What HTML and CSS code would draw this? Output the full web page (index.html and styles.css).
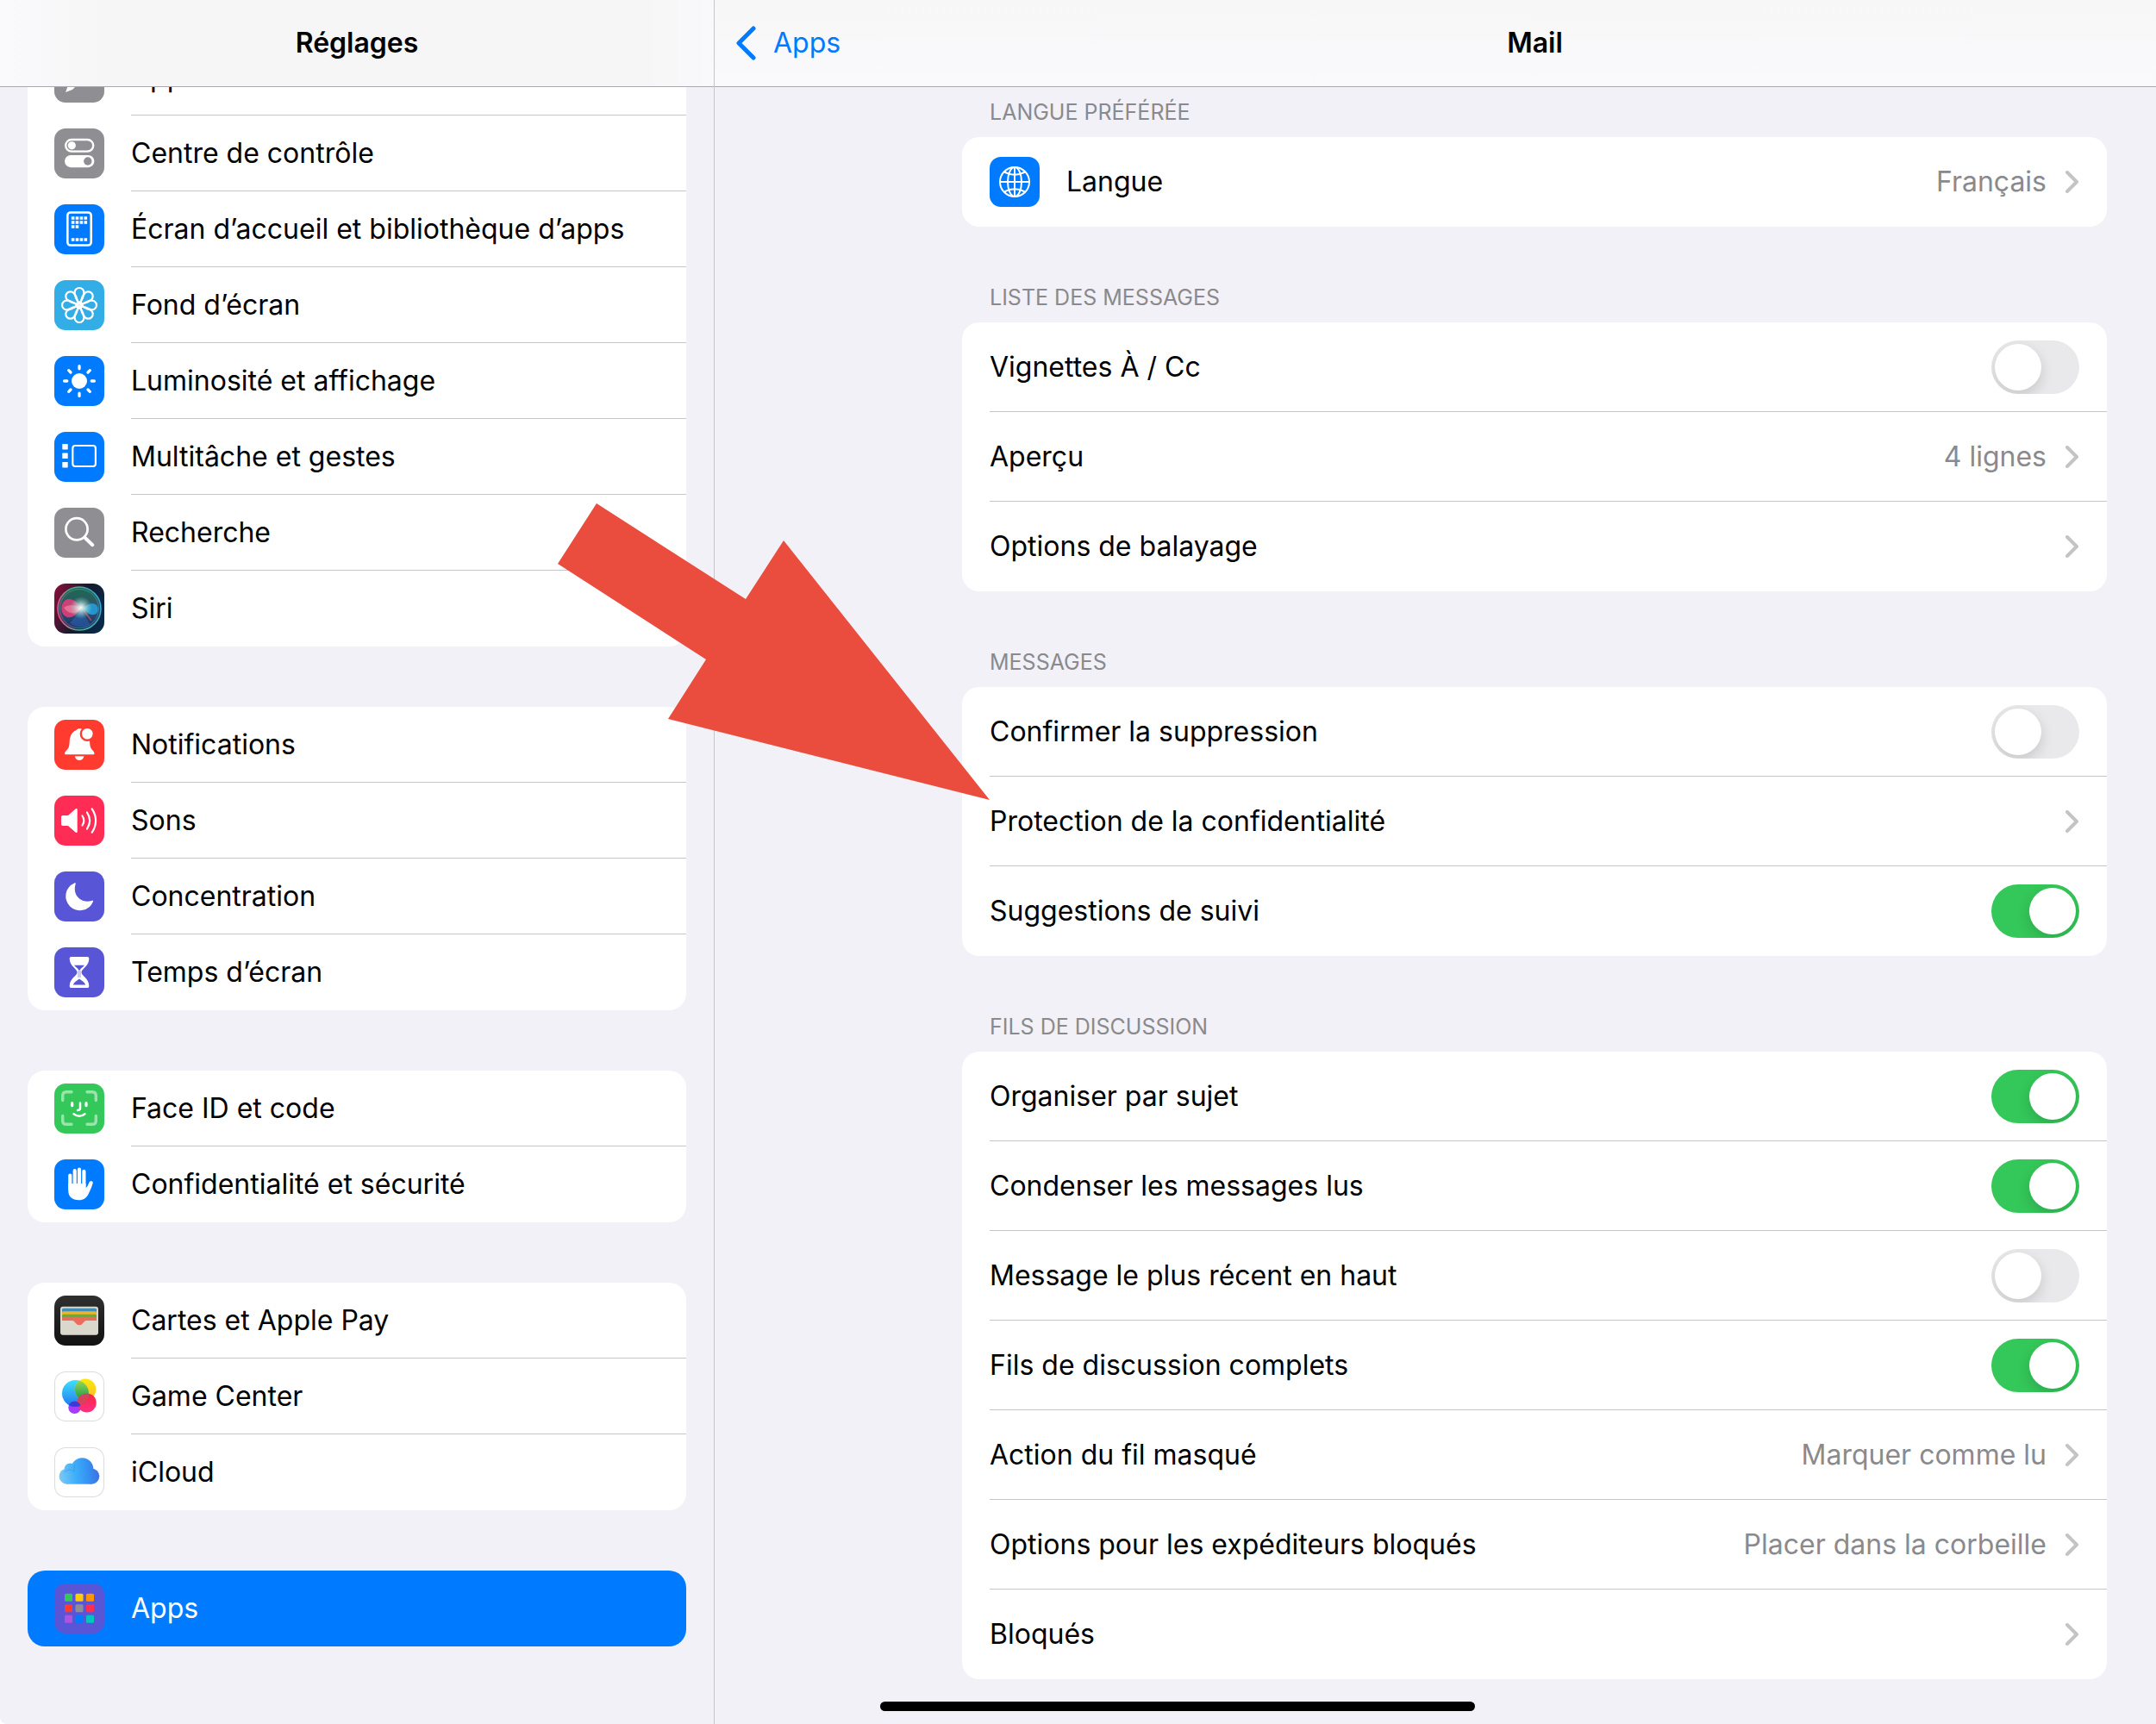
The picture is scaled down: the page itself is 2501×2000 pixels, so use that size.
FILE: index.html
```html
<!DOCTYPE html>
<html lang="fr">

<head>
   <meta charset="UTF-8" />
   <meta name="viewport" content="width=device-width, initial-scale=1" />
   <title>Réglages</title>
   <link rel="stylesheet" href="styles.css">
</head>

<body>
   <div class="app">
      <aside class="sidebar">
         <header class="navbar">
            <h1>Réglages</h1>
         </header>

         <nav class="menu">
            <div class="card">
               <a class="item" href="#">
                  <svg class="icon gray" viewBox="0 0 58 58">
                     <path d="M44 10l5 5-28 28-8 3 3-8z" fill="#fff" />
                  </svg>
                  <span class="label">Apple Pencil</span>
               </a>
               <a class="item" href="#">
                  <svg class="icon gray" viewBox="0 0 58 58">
                     <rect x="13.2" y="13" width="32" height="13.6" rx="6.8" fill="none" stroke="#fff" stroke-width="2.4" />
                     <circle cx="20.3" cy="19.8" r="4.6" fill="#fff" />
                     <rect x="12" y="31" width="34.4" height="14.2" rx="7.1" fill="#fff" />
                     <circle cx="38.8" cy="38" r="4.7" fill="#8e8e93" />
                  </svg>
                  <span class="label">Centre de contrôle</span>
               </a>
               <a class="item" href="#">
                  <svg class="icon blue" viewBox="0 0 58 58">
                     <rect x="15.3" y="9.5" width="27.4" height="38" rx="3.5" fill="none" stroke="#fff" stroke-width="2.6" />
                     <path d="M19.8 16h18.4M19.8 21h18.4M19.8 26h9M19.8 41h18.4" stroke="#fff" stroke-width="3.6" stroke-dasharray="3.6 1.3" />
                  </svg>
                  <span class="label">Écran d’accueil et bibliothèque d’apps</span>
               </a>
               <a class="item" href="#">
                  <svg class="icon cyan" viewBox="0 0 58 58">
                     <defs>
                        <path id="petal" d="M29 27C26 23 23.6 18 23.6 14.400a5.400 5.400 0 0 1 10.800 0C34.400 18 32 23 29 27z" />
                     </defs>
                     <g fill="none" stroke="#fff" stroke-width="2.2">
                        <use href="#petal" />
                        <use href="#petal" transform="rotate(45 29 29)" />
                        <use href="#petal" transform="rotate(90 29 29)" />
                        <use href="#petal" transform="rotate(135 29 29)" />
                        <use href="#petal" transform="rotate(180 29 29)" />
                        <use href="#petal" transform="rotate(225 29 29)" />
                        <use href="#petal" transform="rotate(270 29 29)" />
                        <use href="#petal" transform="rotate(315 29 29)" />
                        <circle cx="29" cy="29" r="3.400" />
                     </g>
                  </svg>
                  <span class="label">Fond d’écran</span>
               </a>
               <a class="item" href="#">
                  <svg class="icon blue" viewBox="0 0 58 58">
                     <circle cx="29" cy="29" r="9" fill="#fff" />
                     <path d="M29 11.6v3.2M29 43.2v3.2M11.6 29h3.2M43.2 29h3.2M16.7 16.7l2.3 2.3M39 39l2.3 2.3M41.3 16.7L39 19M19 39l-2.3 2.3" stroke="#fff" stroke-width="3.3" stroke-linecap="round" />
                  </svg>
                  <span class="label">Luminosité et affichage</span>
               </a>
               <a class="item" href="#">
                  <svg class="icon blue" viewBox="0 0 58 58">
                     <g fill="#fff">
                        <rect x="9.3" y="14" width="6.4" height="6.4" rx="0.6" />
                        <rect x="9.3" y="24.6" width="6.4" height="6.4" rx="0.6" />
                        <rect x="9.3" y="35" width="6.4" height="6.4" rx="0.6" />
                     </g>
                     <rect x="21.3" y="16" width="26.6" height="24" rx="3" fill="none" stroke="#fff" stroke-width="2.2" />
                  </svg>
                  <span class="label">Multitâche et gestes</span>
               </a>
               <a class="item" href="#">
                  <svg class="icon gray" viewBox="0 0 58 58" fill="none" stroke="#fff" stroke-linecap="round">
                     <circle cx="26" cy="24.8" r="12.6" stroke-width="2.7" />
                     <path d="M36 35.2l8.3 8" stroke-width="4" />
                  </svg>
                  <span class="label">Recherche</span>
               </a>
               <a class="item" href="#">
                  <svg class="icon" viewBox="0 0 58 58">
                     <defs>
                        <linearGradient id="siriBg" x1="0" y1="0.3" x2="1" y2="0.7">
                           <stop offset="0" stop-color="#7a1038" />
                           <stop offset="0.5" stop-color="#151a2c" />
                           <stop offset="1" stop-color="#082b4a" />
                        </linearGradient>
                        <linearGradient id="siriRing" x1="0" y1="0.6" x2="1" y2="0.4">
                           <stop offset="0" stop-color="#f0507e" />
                           <stop offset="0.4" stop-color="#4fae93" />
                           <stop offset="1" stop-color="#35a5cf" />
                        </linearGradient>
                        <linearGradient id="siriOrb" x1="0.5" y1="0" x2="0.5" y2="1">
                           <stop offset="0" stop-color="#1c6a50" />
                           <stop offset="0.5" stop-color="#33506c" />
                           <stop offset="1" stop-color="#143068" />
                        </linearGradient>
                        <radialGradient id="siriGlow">
                           <stop offset="0" stop-color="#fff" />
                           <stop offset="0.3" stop-color="#e4fff6" stop-opacity="0.7" />
                           <stop offset="1" stop-color="#7fe0c5" stop-opacity="0" />
                        </radialGradient>
                     </defs>
                     <rect width="58" height="58" fill="url(#siriBg)" />
                     <circle cx="29" cy="29" r="25" fill="url(#siriOrb)" stroke="url(#siriRing)" stroke-width="1.6" />
                     <circle cx="29" cy="29" r="22.5" fill="none" stroke="url(#siriRing)" stroke-opacity="0.6" />
                     <path d="M31 29C25 18 17 16 12 20c-5 4-5 15 1 18 6 4 13-2 18-9z" fill="#e83e78" fill-opacity="0.85" />
                     <path d="M11 28c7-5 14-3 20 1-5 7-13 8-20-1z" fill="#f7a0b8" fill-opacity="0.5" />
                     <path d="M33 29c6-6 12-8 16-4 3 4 2 10-3 11-5 1-9-3-13-7z" fill="#269bd8" fill-opacity="0.9" />
                     <path d="M31 30L18 46c8 6 18 5 23 1z" fill="#2b68bd" fill-opacity="0.5" />
                     <path d="M34 31l9 12" stroke="#d9506b" stroke-width="1.5" stroke-opacity="0.7" />
                     <circle cx="31" cy="28" r="13" fill="url(#siriGlow)" />
                  </svg>
                  <span class="label">Siri</span>
               </a>
            </div>

            <div class="card">
               <a class="item" href="#">
                  <svg class="icon red" viewBox="0 0 58 58">
                     <path d="M12 39c0-2 3-4 4.200-6 2-3.500 1-8 2-12 1-4.500 3.500-7.500 7.300-9 1-1.300 2.500-1.800 4-1.800 2 0 3 .6 4 1.800 4 1.800 6 5 7 9 1 4 .2 8.500 2 12 1.200 2 4 4 4 6 0 .9-.6 1.300-1.500 1.300h-31.500c-.9 0-1.500-.4-1.500-1.300z" fill="#fff" />
                     <path d="M23.8 42.3h10.600c-.6 3-2.500 4.700-5.300 4.700s-4.700-1.700-5.300-4.700z" fill="#fff" />
                     <circle cx="38.3" cy="16.3" r="7.5" fill="#fff" stroke="#ff3b30" stroke-width="2.4" />
                  </svg>
                  <span class="label">Notifications</span>
               </a>
               <a class="item" href="#">
                  <svg class="icon pink" viewBox="0 0 58 58">
                     <path d="M10 23h6l8.500-7.600c1-.8 2.200-.4 2.200.9v25.400c0 1.300-1.200 1.700-2.200.9L16 35h-6c-1.300 0-2-.8-2-2v-8c0-1.200.7-2 2-2z" fill="#fff" />
                     <path d="M32.5 23.5c2.300 3.400 2.300 7.600 0 11M38 19.500c4 6 4 13 0 19M43.7 15.300c5.800 8.400 5.800 19 0 27.400" fill="none" stroke="#fff" stroke-width="2.2" stroke-linecap="round" />
                  </svg>
                  <span class="label">Sons</span>
               </a>
               <a class="item" href="#">
                  <svg class="icon indigo" viewBox="0 0 58 58">
                     <path d="M23.3 13.500A16.500 16.500 0 1 0 45 35c.4-1-.3-1.600-1.300-1.200C32 38 20.500 28 24.700 14.600c.3-1-.4-1.500-1.400-1.100z" fill="#fff" />
                  </svg>
                  <span class="label">Concentration</span>
               </a>
               <a class="item" href="#">
                  <svg class="icon indigo" viewBox="0 0 58 58">
                     <path d="M20 11h18c1.600 0 2.300.9 2.300 2.300C40.300 22 31.500 25 31.500 29s8.800 7 8.800 15.700c0 1.400-.7 2.300-2.300 2.300H20c-1.600 0-2.300-.9-2.300-2.300C17.700 36 26.500 33 26.500 29s-8.800-7-8.800-15.700C17.700 11.900 18.400 11 20 11z" fill="#fff" />
                     <path d="M23 20.700h12c-1.500 2-5 3.800-5.200 5.800h-1.600c-.2-2-3.700-3.800-5.200-5.800zM21.800 43.600c1-3 4-4.500 7.200-7 3.200 2.500 6.200 4 7.200 7z" fill="#5856d6" />
                     <path d="M28 27v8M30 27v8" stroke="#5856d6" stroke-width="0.6" />
                  </svg>
                  <span class="label">Temps d’écran</span>
               </a>
            </div>

            <div class="card">
               <a class="item" href="#">
                  <svg class="icon green" viewBox="0 0 58 58" fill="none" stroke="#fff" stroke-linecap="round">
                     <path d="M9.7 19.500V14q0-4.300 4.300-4.300h6M38 9.700h6q4.300 0 4.300 4.300v5.500M48.300 37.500V43q0 4.300-4.300 4.300h-6M20 47.300h-6q-4.300 0-4.300-4.300v-5.500" stroke-width="3.4" stroke-opacity="0.5" />
                     <path d="M20.700 22.700v3M37 22.700v3" stroke-width="3.2" />
                     <path d="M30 22.500v6.300q0 2.200-3 2.200M22.500 35.200q6.500 5 13 0" stroke-width="2.5" />
                  </svg>
                  <span class="label">Face ID et code</span>
               </a>
               <a class="item" href="#">
                  <svg class="icon blue" viewBox="0 0 58 58">
                     <path d="M18.300 18.500V34M23.700 13.200V32M29 11.600V32M34.400 13.800V32" stroke="#fff" stroke-width="4.2" stroke-linecap="round" />
                     <path d="M16.200 28h20.300v5c1.800-1 2.500-3 4-6.500.8-1.800 4.600-1.600 4.200.7-.8 4-3 8.500-5 12.800-2.500 5-6 7.300-11 7.300C20.500 47.300 16.200 43 16.200 36z" fill="#fff" />
                  </svg>
                  <span class="label">Confidentialité et sécurité</span>
               </a>
            </div>

            <div class="card">
               <a class="item" href="#">
                  <svg class="icon black" viewBox="0 0 58 58">
                     <rect x="7" y="12.7" width="44" height="33" rx="3" fill="#dad7cc" />
                     <rect x="9" y="14.8" width="40" height="6" rx="1.5" fill="#3f8fb8" />
                     <rect x="9" y="18.3" width="40" height="6" rx="1.5" fill="#f0b32d" />
                     <rect x="9" y="21.8" width="40" height="6" rx="1.5" fill="#5cb03c" />
                     <path d="M9 25.300h40v3.700H37.500c-4 0-4 5.300-8.500 5.300s-4.500-5.300-8.500-5.300H9z" fill="#ee6b5b" />
                  </svg>
                  <span class="label">Cartes et Apple Pay</span>
               </a>
               <a class="item" href="#">
                  <svg class="icon white" viewBox="0 0 58 58">
                     <defs>
                        <linearGradient id="gcBlue" x1="0" y1="0" x2="0" y2="1">
                           <stop offset="0" stop-color="#3fe0fb" />
                           <stop offset="1" stop-color="#2176f0" />
                        </linearGradient>
                        <linearGradient id="gcYellow" x1="0" y1="0" x2="0" y2="1">
                           <stop offset="0" stop-color="#fbe90c" />
                           <stop offset="1" stop-color="#fdb827" />
                        </linearGradient>
                        <linearGradient id="gcGreen" x1="0" y1="0" x2="0" y2="1">
                           <stop offset="0" stop-color="#a5dc4f" />
                           <stop offset="1" stop-color="#109a55" />
                        </linearGradient>
                        <linearGradient id="gcRed" x1="0" y1="0" x2="0" y2="1">
                           <stop offset="0" stop-color="#f8283f" />
                           <stop offset="1" stop-color="#ff2f86" />
                        </linearGradient>
                        <clipPath id="gcClip">
                           <circle cx="24.5" cy="25.5" r="15.5" />
                        </clipPath>
                     </defs>
                     <circle cx="23.5" cy="41.8" r="7.2" fill="#a63bf8" />
                     <circle cx="24.5" cy="25.5" r="15.5" fill="url(#gcBlue)" />
                     <circle cx="36" cy="20.8" r="12.3" fill="url(#gcYellow)" />
                     <circle cx="37.7" cy="36.4" r="11" fill="url(#gcRed)" />
                     <g clip-path="url(#gcClip)">
                        <circle cx="36" cy="20.8" r="12.3" fill="url(#gcGreen)" />
                        <circle cx="37.7" cy="36.4" r="11" fill="#d8415c" />
                        <circle cx="23.5" cy="41.8" r="7.2" fill="#3d38d8" />
                     </g>
                  </svg>
                  <span class="label">Game Center</span>
               </a>
               <a class="item" href="#">
                  <svg class="icon white" viewBox="0 0 58 58">
                     <defs>
                        <linearGradient id="cloud" gradientUnits="userSpaceOnUse" x1="6" y1="34" x2="51" y2="30">
                           <stop offset="0" stop-color="#7cc8f5" />
                           <stop offset="0.4" stop-color="#3fb0fa" />
                           <stop offset="0.75" stop-color="#3490f2" />
                           <stop offset="1" stop-color="#3f72e4" />
                        </linearGradient>
                     </defs>
                     <g fill="url(#cloud)">
                        <circle cx="14.6" cy="33.7" r="9" />
                        <circle cx="18.3" cy="25.3" r="6.7" />
                        <circle cx="32.3" cy="25.3" r="13" />
                        <circle cx="43.2" cy="33.6" r="9.1" />
                        <rect x="14.5" y="27" width="28.7" height="15.7" />
                     </g>
                     <path d="M12 29c2-3.500 8-4 11-.5a13 13 0 0 1 1-8.500" fill="none" stroke="#2593dc" stroke-width="1.2" stroke-opacity="0.4" />
                  </svg>
                  <span class="label">iCloud</span>
               </a>
            </div>

            <div class="card">
               <a class="item selected" href="#" aria-current="page">
                  <svg class="icon indigo" viewBox="0 0 58 58">
                     <rect x="12" y="11.7" width="9" height="9" rx="1.5" fill="#34c759" />
                     <rect x="24.5" y="11.7" width="9" height="9" rx="1.5" fill="#ffcc00" />
                     <rect x="37" y="11.7" width="9" height="9" rx="1.5" fill="#ff9500" />
                     <rect x="12" y="24.3" width="9" height="9" rx="1.5" fill="#ff3b30" />
                     <rect x="24.5" y="24.3" width="9" height="9" rx="1.5" fill="#8e8e93" />
                     <rect x="37" y="24.3" width="9" height="9" rx="1.5" fill="#ff2d55" />
                     <rect x="12" y="36.7" width="9" height="9" rx="1.5" fill="#af52de" />
                     <rect x="24.5" y="36.7" width="9" height="9" rx="1.5" fill="#007aff" />
                     <rect x="37" y="36.7" width="9" height="9" rx="1.5" fill="#00c7be" />
                  </svg>
                  <span class="label">Apps</span>
               </a>
            </div>
         </nav>
      </aside>

      <main class="detail">
         <header class="navbar detail-navbar">
            <a class="back" href="#">
               <svg viewBox="0 0 24 40">
                  <path d="M21 3L4 20l17 17" />
               </svg>
               Apps
            </a>
            <h1>Mail</h1>
         </header>

         <div class="settings">
            <section>
               <h2>Langue préférée</h2>
               <div class="card">
                  <a class="row" href="#">
                     <svg class="icon blue" viewBox="0 0 58 58" fill="none" stroke="#fff" stroke-width="2">
                        <circle cx="29" cy="29" r="17" />
                        <ellipse cx="29" cy="29" rx="8" ry="17" />
                        <path d="M29 12v34M12 29h34M17 17.500q12 6.500 24 0M17 40.500q12-6.500 24 0" />
                     </svg>
                     <span class="text">Langue</span>
                     <span class="value">Français</span>
                     <svg class="chevron" viewBox="0 0 16 26"><path d="M2 2l11 11L2 24" /></svg>
                  </a>
               </div>
            </section>

            <section>
               <h2>Liste des messages</h2>
               <div class="card">
                  <label class="row">
                     <span class="text">Vignettes À / Cc</span>
                     <input type="checkbox" class="switch" />
                  </label>
                  <a class="row" href="#">
                     <span class="text">Aperçu</span>
                     <span class="value">4 lignes</span>
                     <svg class="chevron" viewBox="0 0 16 26"><path d="M2 2l11 11L2 24" /></svg>
                  </a>
                  <a class="row" href="#">
                     <span class="text">Options de balayage</span>
                     <svg class="chevron" viewBox="0 0 16 26"><path d="M2 2l11 11L2 24" /></svg>
                  </a>
               </div>
            </section>

            <section>
               <h2>Messages</h2>
               <div class="card">
                  <label class="row">
                     <span class="text">Confirmer la suppression</span>
                     <input type="checkbox" class="switch" />
                  </label>
                  <a class="row" href="#">
                     <span class="text">Protection de la confidentialité</span>
                     <svg class="chevron" viewBox="0 0 16 26"><path d="M2 2l11 11L2 24" /></svg>
                  </a>
                  <label class="row">
                     <span class="text">Suggestions de suivi</span>
                     <input type="checkbox" class="switch" checked />
                  </label>
               </div>
            </section>

            <section>
               <h2>Fils de discussion</h2>
               <div class="card">
                  <label class="row">
                     <span class="text">Organiser par sujet</span>
                     <input type="checkbox" class="switch" checked />
                  </label>
                  <label class="row">
                     <span class="text">Condenser les messages lus</span>
                     <input type="checkbox" class="switch" checked />
                  </label>
                  <label class="row">
                     <span class="text">Message le plus récent en haut</span>
                     <input type="checkbox" class="switch" />
                  </label>
                  <label class="row">
                     <span class="text">Fils de discussion complets</span>
                     <input type="checkbox" class="switch" checked />
                  </label>
                  <a class="row" href="#">
                     <span class="text">Action du fil masqué</span>
                     <span class="value">Marquer comme lu</span>
                     <svg class="chevron" viewBox="0 0 16 26"><path d="M2 2l11 11L2 24" /></svg>
                  </a>
                  <a class="row" href="#">
                     <span class="text">Options pour les expéditeurs bloqués</span>
                     <span class="value">Placer dans la corbeille</span>
                     <svg class="chevron" viewBox="0 0 16 26"><path d="M2 2l11 11L2 24" /></svg>
                  </a>
                  <a class="row" href="#">
                     <span class="text">Bloqués</span>
                     <svg class="chevron" viewBox="0 0 16 26"><path d="M2 2l11 11L2 24" /></svg>
                  </a>
               </div>
            </section>
         </div>
      </main>

      <svg class="arrow" viewBox="0 0 501 344">
         <polygon points="45,0 218,111 262,43 501,344 128,250 172,181 0,70" />
      </svg>
      <div class="home-bar"></div>
   </div>
</body>

</html>
```

FILE: styles.css
```css
:root {
   --bg: #f2f1f7;
   --blue: #007aff;
   --separator: #c6c6c8;
   --secondary-text: #8a8a8e;
   --radius: 20px;
}

* {
   box-sizing: border-box;
   margin: 0;
   padding: 0;
}

body {
   font-family: Inter, "Liberation Sans", sans-serif;
   font-size: 32px;
   line-height: 40px;
   background: #fff;
   color: #000;
}

a {
   color: inherit;
   text-decoration: none;
}

.app {
   position: relative;
   display: flex;
   min-height: 100vh;
   background: var(--bg);
   border-bottom-left-radius: 8px;
   overflow: hidden;
}

/* nav bars */
.navbar {
   position: sticky;
   top: 0;
   z-index: 1;
   display: flex;
   align-items: center;
   justify-content: center;
   height: 101px;
   border-bottom: 1px solid #a9a9af;
   background: linear-gradient(to right, #fafafc, #f6f6f7 15%, #f6f6f7 90%, #f9f9fb);
}

.navbar h1 {
   font-size: 32px;
   font-weight: 600;
}

.detail-navbar {
   padding-left: 231px;
   background: linear-gradient(#f7f7f8, #fafafc);
}

.back {
   position: absolute;
   left: 24px;
   display: flex;
   align-items: center;
   gap: 20px;
   color: var(--blue);
}

.back svg {
   width: 24px;
   height: 40px;
   fill: none;
   stroke: currentColor;
   stroke-width: 5;
   stroke-linecap: round;
   stroke-linejoin: round;
}

/* sidebar */
.sidebar {
   flex: 0 0 829px;
   border-right: 1px solid var(--separator);
}

/* list is scrolled a bit under the nav bar */
.menu {
   display: flex;
   flex-direction: column;
   gap: 70px;
   margin-top: -55px;
   padding: 0 32px 90px;
}

.card {
   background: #fff;
   border-radius: var(--radius);
   overflow: hidden;
}

.item {
   display: flex;
   align-items: center;
   gap: 31px;
   height: 88px;
   padding-left: 31px;
}

.item .label {
   flex: 1;
   align-self: stretch;
   display: flex;
   align-items: center;
   border-bottom: 1px solid var(--separator);
}

.item:last-child .label {
   border-bottom: none;
}

.item.selected {
   background: var(--blue);
   color: #fff;
}

.icon {
   flex: none;
   width: 58px;
   height: 58px;
   border-radius: 13px;
}

.gray {
   background: #8e8e93;
}

.blue {
   background: var(--blue);
}

.cyan {
   background: #32ade6;
}

.red {
   background: #ff3b30;
}

.pink {
   background: #ff2d55;
}

.indigo {
   background: #5856d6;
}

.green {
   background: #34c759;
}

.black {
   background: linear-gradient(#2f2f2f, #111);
}

.white {
   background: #fff;
   box-shadow: inset 0 0 0 1px #dcdcde;
}

/* detail pane */
.detail {
   flex: 1;
}

.settings {
   padding: 10px 57px 52px 287px;
}

.settings h2 {
   padding: 0 32px 10px;
   font-size: 25px;
   font-weight: 400;
   line-height: 38px;
   text-transform: uppercase;
   color: var(--secondary-text);
}

section + section {
   margin-top: 63px;
}

.row {
   position: relative;
   display: flex;
   align-items: center;
   height: 104px;
   padding: 0 32px;
}

.row + .row::before {
   content: "";
   position: absolute;
   top: -1px;
   left: 32px;
   right: 0;
   height: 1px;
   background: var(--separator);
}

.row .icon {
   margin-right: 31px;
}

.text {
   flex: 1;
}

.value {
   color: var(--secondary-text);
}

.chevron {
   width: 16px;
   height: 26px;
   margin-left: 22px;
   fill: none;
   stroke: #c4c4c7;
   stroke-width: 4;
   stroke-linecap: round;
   stroke-linejoin: round;
}

.switch {
   appearance: none;
   width: 102px;
   height: 62px;
   padding: 4px;
   border-radius: 31px;
   background: #e9e9eb;
   overflow: hidden;
   cursor: pointer;
}

.switch::before {
   content: "";
   display: block;
   width: 54px;
   height: 54px;
   border-radius: 50%;
   background: #fff;
   box-shadow: 0 6px 16px rgba(0, 0, 0, 0.15);
}

.switch:checked {
   background: #34c759;
}

.switch:checked::before {
   margin-left: 40px;
}

/* overlays */
.arrow {
   position: absolute;
   z-index: 2;
   top: 584px;
   left: 647px;
   width: 501px;
   height: 344px;
   fill: #ea4d3e;
}

.home-bar {
   position: absolute;
   left: 1021px;
   bottom: 15px;
   width: 690px;
   height: 11px;
   border-radius: 6px;
   background: #000;
}
```
